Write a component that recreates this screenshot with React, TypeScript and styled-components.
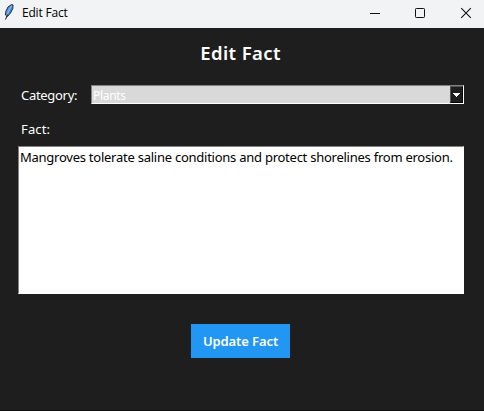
import React from "react";
import styled, { createGlobalStyle } from "styled-components";

const GlobalStyle = createGlobalStyle`
  * { box-sizing: border-box; }
  body { margin: 0; overflow: hidden; background: #1e1e1e; }
`;

const Window = styled.div`
  width: 484px;
  height: 411px;
  overflow: hidden;
  display: flex;
  flex-direction: column;
  background: #1e1e1e;
  border-bottom: 1px solid #0c0c0c;
  font-family: "Noto Sans", "Open Sans", sans-serif;
  color: #fff;
  white-space: nowrap;
`;

const TitleBar = styled.header`
  height: 28px;
  flex: none;
  display: flex;
  align-items: flex-start;
  padding-left: 3px;
  background: #f1f3f5;
  color: #000;
`;

const WindowTitle = styled.span`
  flex: 1;
  margin-left: 6px;
  font-family: "Open Sans", sans-serif;
  font-size: 12px;
  line-height: 26px;
  letter-spacing: -0.2px;
`;

const WindowButton = styled.button`
  width: 46px;
  height: 25px;
  padding: 0;
  border: 0;
  flex: none;
  display: grid;
  place-items: center;
  background: transparent;
  color: #111;

  &:first-of-type { width: 44px; }
  &:last-child { margin-right: -5px; }
`;

const Content = styled.main`
  flex: 1;
  display: flex;
  flex-direction: column;
  padding: 10px 20px 0 18px;
`;

const Heading = styled.h1`
  margin: 0;
  height: 31px;
  line-height: 29px;
  padding-right: 1px;
  text-align: center;
  font-size: 18.5px;
  font-weight: 600;
  letter-spacing: 0.4px;
`;

const CategoryRow = styled.div`
  display: flex;
  height: 19px;
  margin-top: 16px;
`;

const Label = styled.label<{ $width?: number }>`
  width: ${(p) => (p.$width ? `${p.$width}px` : "auto")};
  padding-left: 3px;
  font-size: 13px;
  line-height: 20px;
  letter-spacing: ${(p) => (p.$width ? -0.3 : 0.15)}px;
`;

const Select = styled.div`
  flex: 1;
  display: flex;
  border: 1px solid #fff;
  border-top-color: #828282;
  border-left-color: #828282;
  background: #d9d9d9;
`;

const SelectValue = styled.span`
  flex: 1;
  padding-left: 1px;
  font-size: 12px;
  line-height: 19px;
  letter-spacing: -0.3px;
`;

const DropButton = styled.button`
  width: 13px;
  padding: 0;
  display: grid;
  place-items: center;
  border: 1px solid #000;
  border-left-color: #555;
  border-top-color: #555;
  background: #1e1e1e;
`;

const FactLabel = styled(Label)`
  margin-top: 15px;
  height: 27px;
`;

const FactArea = styled.div`
  height: 148px;
  border: 1px solid #fff;
  border-top-color: #828282;
  border-left-color: #828282;
  background: #fff;
  color: #000;
  padding-left: 1px;
  font-size: 13px;
  line-height: 20px;
  letter-spacing: -0.25px;
`;

const UpdateButton = styled.button`
  width: 99px;
  height: 34px;
  margin: 30px 0 0 173px;
  padding: 0;
  border: 0;
  background: #2196f3;
  color: #fff;
  font-family: inherit;
  font-size: 13px;
  font-weight: 600;
  letter-spacing: -0.1px;
`;

const FeatherIcon = () => (
  <svg width="13" height="25" viewBox="0 0 13 25">
    <path d="M8.6 4.5 10 5 9.8 8.5 7.5 13 4.5 16.5 2.5 15 2.8 11.5 5 7Z" fill="#5b9be6" stroke="#202630" strokeWidth="1" />
    <path d="M8.5 6 5.8 11 3.6 16" fill="none" stroke="#8fc0fa" strokeWidth="1" />
    <path d="M9 7.5 6.5 13 4.5 15.5" fill="none" stroke="#2f74c0" strokeWidth="1" />
    <path d="M4.5 14.5 2.5 19.5" fill="none" stroke="#15191f" strokeWidth="1" />
  </svg>
);

export default function App() {
  return (
    <>
      <GlobalStyle />
      <Window>
        <TitleBar>
          <FeatherIcon />
          <WindowTitle>Edit Fact</WindowTitle>
          <WindowButton aria-label="Minimize">
            <svg width="12" height="12"><path d="M1 6.5h10" stroke="currentColor" /></svg>
          </WindowButton>
          <WindowButton aria-label="Maximize">
            <svg width="12" height="12"><rect x="1.5" y="1.5" width="9" height="9" rx="0.8" fill="none" stroke="currentColor" /></svg>
          </WindowButton>
          <WindowButton aria-label="Close">
            <svg width="12" height="12"><path d="M1.2 1.2l9.6 9.6M10.8 1.2l-9.6 9.6" stroke="currentColor" strokeWidth="1.1" /></svg>
          </WindowButton>
        </TitleBar>
        <Content>
          <Heading>Edit Fact</Heading>
          <CategoryRow>
            <Label $width={73}>Category:</Label>
            <Select>
              <SelectValue>Plants</SelectValue>
              <DropButton aria-label="Open categories">
                <svg width="7" height="4" shapeRendering="crispEdges"><path d="M0 0h7v1h-1v1h-1v1h-1v1h-1v-1h-1v-1h-1v-1h-1z" fill="#fff" /></svg>
              </DropButton>
            </Select>
          </CategoryRow>
          <FactLabel>Fact:</FactLabel>
          <FactArea>Mangroves tolerate saline conditions and protect shorelines from erosion.</FactArea>
          <UpdateButton>Update Fact</UpdateButton>
        </Content>
      </Window>
    </>
  );
}
